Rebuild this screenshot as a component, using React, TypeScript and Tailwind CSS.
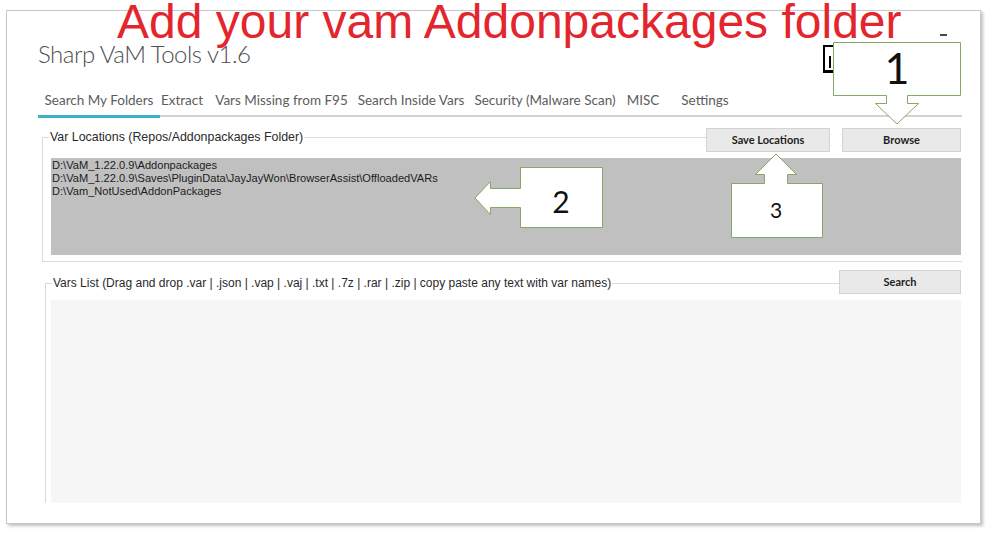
const tabs = [
  { label: "Search My Folders", w: "w-[122px]", active: true },
  { label: "Extract", w: "w-[44px]" },
  { label: "Vars Missing from F95", w: "w-[155px]" },
  { label: "Search Inside Vars", w: "w-[104px]" },
  { label: "Security (Malware Scan)", w: "w-[164px]" },
  { label: "MISC", w: "w-[32px]" },
  { label: "Settings", w: "w-[92px]" },
];

const locations = [
  "D:\\VaM_1.22.0.9\\Addonpackages",
  "D:\\VaM_1.22.0.9\\Saves\\PluginData\\JayJayWon\\BrowserAssist\\OffloadedVARs",
  "D:\\Vam_NotUsed\\AddonPackages",
];

function WinButton({ label, className }: { label: string; className: string }) {
  return (
    <div
      className={`h-[24px] shrink-0 flex items-center justify-center bg-[#e9e9e9] border border-[#d3d3d3] text-[11px] font-bold text-[#1e1e1e] font-['Lato',sans-serif] ${className}`}
    >
      {label}
    </div>
  );
}

export default function App() {
  return (
    <div className="relative w-[989px] h-[533px] overflow-hidden bg-white">
      {/* app window */}
      <div className="ml-[6px] mt-[10px] w-[975px] h-[514px] flex flex-col bg-white border border-[#c8c8c8] shadow-[2px_2px_3px_rgba(0,0,0,0.25)] pl-[31px] pr-[18px]">
        {/* title bar */}
        <div className="h-[77px] flex items-start">
          <div className="mt-[28px] text-[24px] leading-[30px] tracking-[-0.5px] font-light text-[#4f4f4f] font-['Lato',sans-serif] whitespace-nowrap">
            Sharp VaM Tools v1.6
          </div>
          <div className="ml-auto flex items-start">
            <div className="mt-[34px] w-[27px] h-[28px] border-l-2 border-t-2 border-b-[3px] border-black flex items-end pl-[4px] pb-[2px]">
              <div className="w-[2px] h-[12px] bg-black" />
            </div>
            <div className="ml-[90px] mt-[23px] w-[7px] h-[2px] bg-[#444]" />
            <div className="w-[15px]" />
          </div>
        </div>

        {/* tabs */}
        <div className="flex border-b-2 border-[#d2d2d2] font-['Lato',sans-serif] text-[13.5px] text-[#5c5c5c]">
          {tabs.map((t) => (
            <div
              key={t.label}
              className={`${t.w} shrink-0 flex items-center justify-center whitespace-nowrap pb-[3px] ${
                t.active ? "h-[30px] -mb-[3px] border-b-[3px] border-[#3cb0c6]" : "h-[27px]"
              }`}
            >
              {t.label}
            </div>
          ))}
        </div>

        {/* var locations group */}
        <div className="mt-[11px] ml-[4px] flex flex-col">
          <div className="flex h-[24px]">
            <div className="w-[7px] mt-[9px] border-t border-l border-[#dadada]" />
            <div className="mt-[2px] px-[1px] text-[12.4px] leading-[14px] text-[#2a2a2a] font-['Liberation_Sans',Arial,sans-serif] whitespace-nowrap">
              Var Locations (Repos/Addonpackages Folder)
            </div>
            <div className="flex-1 mt-[9px] border-t border-[#dadada]" />
            <WinButton label="Save Locations" className="w-[124px]" />
            <WinButton label="Browse" className="w-[119px] ml-[12px] mr-[1px]" />
          </div>
          <div className="border-l border-b border-[#dadada] pl-[8px] pt-[6px] pb-[6px] pr-[1px]">
            <div className="h-[97px] bg-[#c0c0c0] pl-[1px] pt-[1px] text-[11.1px] leading-[13px] text-[#1c1c1c] font-['Liberation_Sans',Arial,sans-serif]">
              {locations.map((l) => (
                <div key={l} className="whitespace-nowrap">
                  {l}
                </div>
              ))}
            </div>
          </div>
        </div>

        {/* vars list group */}
        <div className="mt-[8px] ml-[7px] flex flex-col">
          <div className="flex h-[24px]">
            <div className="w-[7px] mt-[13px] border-t border-l border-[#dadada]" />
            <div className="mt-[6px] px-[1px] text-[12px] leading-[14px] text-[#2a2a2a] font-['Liberation_Sans',Arial,sans-serif] whitespace-nowrap">
              Vars List (Drag and drop .var | .json | .vap | .vaj | .txt | .7z | .rar | .zip | copy paste any text with var names)
            </div>
            <div className="flex-1 mt-[13px] border-t border-[#dadada]" />
            <WinButton label="Search" className="w-[122px] mr-[1px]" />
          </div>
          <div className="border-l border-[#dadada] pl-[5px] pt-[6px] pr-[1px]">
            <div className="h-[203px] bg-[#f6f6f6]" />
          </div>
        </div>
      </div>

      {/* annotation heading */}
      <div className="absolute left-[117px] top-[-2px] text-[48px] leading-[48px] text-[#e3262d] font-['Liberation_Sans',Arial,sans-serif] whitespace-nowrap">
        Add your vam Addonpackages folder
      </div>

      {/* numbered callouts */}
      <svg className="absolute left-0 top-0 pointer-events-none" width="989" height="533" viewBox="0 0 989 533">
        <g fill="#ffffff" stroke="#86a865" strokeWidth="1">
          <polygon points="833.5,42.5 960.5,42.5 960.5,95.5 907.5,95.5 907.5,103.5 918.5,103.5 897,124 875.5,103.5 886.5,103.5 886.5,95.5 833.5,95.5" />
          <polygon points="520.5,167.5 602.5,167.5 602.5,227.5 520.5,227.5 520.5,207.5 490.5,207.5 490.5,214.5 475,198 490.5,181.5 490.5,188.5 520.5,188.5" />
          <polygon points="731.5,183.5 764.5,183.5 764.5,174.5 755.5,174.5 776,154 796.5,174.5 787.5,174.5 787.5,183.5 822.5,183.5 822.5,237.5 731.5,237.5" />
        </g>
        <g fill="#111111" fontFamily="Lato, 'Open Sans', sans-serif" textAnchor="middle">
          <text x="897" y="84" fontSize="43">1</text>
          <text x="561" y="213" fontSize="30">2</text>
          <text x="776" y="218" fontSize="21">3</text>
        </g>
      </svg>
    </div>
  );
}
